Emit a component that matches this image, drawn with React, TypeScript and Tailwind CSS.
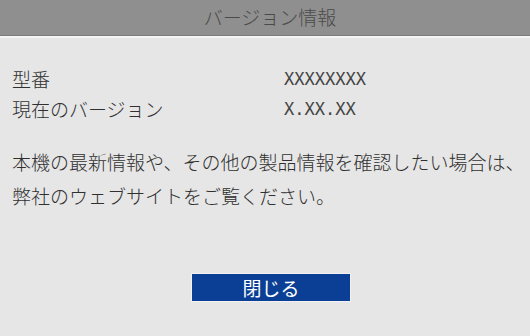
export default function App() {
  const jp = { fontFamily: '"Noto Sans CJK JP", "Noto Sans", sans-serif' };
  return (
    <div className="w-[530px] h-[336px] bg-[#e6e6e6] flex flex-col overflow-hidden font-light" style={jp}>
      <div className="h-[36px] bg-[#8f8f8f] border-b border-[#7c7c7c] flex items-center justify-center pl-[10px] text-[19px] text-[#4a4a4a] shrink-0">
        バージョン情報
      </div>
      <div className="h-[2px] bg-[#f4f4f4] shrink-0" />
      <div className="flex flex-col pl-[12px] text-[#303030] text-[19px] leading-[30px]">
        <div className="mt-[26px] flex">
          <div className="w-[272px]">型番</div>
          <div className="text-[17px] text-[#444]" style={{ fontFamily: '"DejaVu Sans Mono", monospace' }}>XXXXXXXX</div>
        </div>
        <div className="flex">
          <div className="w-[272px]">現在のバージョン</div>
          <div className="text-[17px] text-[#444]" style={{ fontFamily: '"DejaVu Sans Mono", monospace' }}>X.XX.XX</div>
        </div>
        <p className="mt-[21px] leading-[34px]">
          本機の最新情報や、その他の製品情報を確認したい場合は、<br />
          弊社のウェブサイトをご覧ください。
        </p>
      </div>
      <div className="flex justify-center mt-auto mb-[34px]">
        <button className="w-[160px] h-[29px] ml-[12px] bg-[#0b3f96] border border-[#f2f2f2] text-white text-[19px] font-normal leading-none flex items-center justify-center">
          閉じる
        </button>
      </div>
    </div>
  );
}
